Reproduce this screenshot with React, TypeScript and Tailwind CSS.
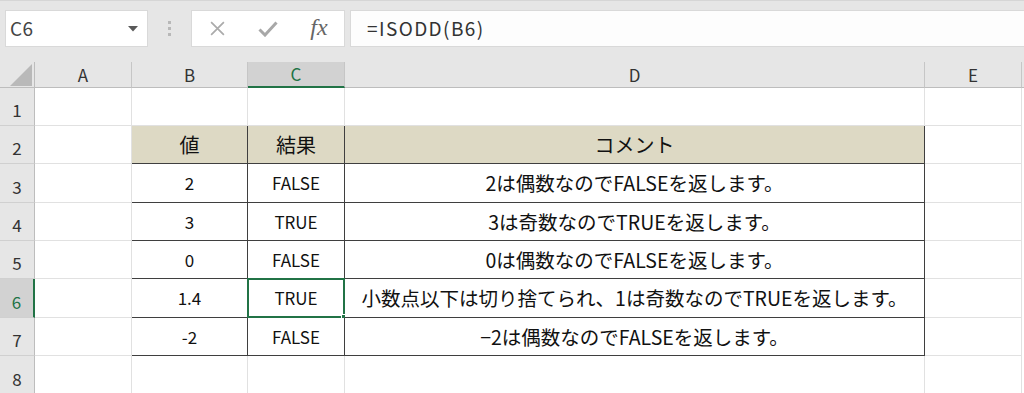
import React from "react";

type Row = { n: number; h: string; cells: [string, string, string] | null; header?: boolean };

const rows: Row[] = [
  { n: 1, h: "h-[38px]", cells: null },
  { n: 2, h: "h-[38px]", cells: ["値", "結果", "コメント"], header: true },
  { n: 3, h: "h-[39px]", cells: ["2", "FALSE", "2は偶数なのでFALSEを返します。"] },
  { n: 4, h: "h-[38px]", cells: ["3", "TRUE", "3は奇数なのでTRUEを返します。"] },
  { n: 5, h: "h-[38px]", cells: ["0", "FALSE", "0は偶数なのでFALSEを返します。"] },
  { n: 6, h: "h-[39px]", cells: ["1.4", "TRUE", "小数点以下は切り捨てられ、1は奇数なのでTRUEを返します。"] },
  { n: 7, h: "h-[38px]", cells: ["-2", "FALSE", "−2は偶数なのでFALSEを返します。"] },
  { n: 8, h: "h-[39px]", cells: null },
];

const cjk = "font-['Noto_Sans_CJK_JP','Noto_Sans',sans-serif]";

function Toolbar() {
  return (
    <div className="h-[62px] bg-[#e6e6e6] border-t border-[#d6d6d6] flex items-start pt-[9px] pl-[5px]">
      <div className="w-[143px] h-[37px] bg-white border border-[#d9d9d9] flex items-center justify-between pl-[4px] pr-[9px]">
        <span className={`text-[19px] text-[#444] tracking-[0.5px] ${cjk}`}>C6</span>
        <svg width="10" height="6" viewBox="0 0 10 6">
          <polygon points="0,0 10,0 5,5.5" fill="#595959" />
        </svg>
      </div>
      <div className="w-[43px] h-[37px] flex flex-col items-center justify-center gap-[3px]">
        <div className="w-[3px] h-[3px] bg-[#b8b8b8]" />
        <div className="w-[3px] h-[3px] bg-[#b8b8b8]" />
        <div className="w-[3px] h-[3px] bg-[#b8b8b8]" />
      </div>
      <div className="w-[154px] h-[37px] bg-white border border-[#d9d9d9] flex items-center">
        <div className="w-[50px] flex justify-center pl-[1px]">
          <svg width="17" height="17" viewBox="0 0 16 16">
            <path d="M2 2 L14 14 M14 2 L2 14" stroke="#ababab" strokeWidth="1.6" />
          </svg>
        </div>
        <div className="w-[52px] flex justify-center">
          <svg width="20" height="16" viewBox="0 0 20 16">
            <path d="M1.5 8.5 L7 14 L18.5 1.5" stroke="#a8a8a8" strokeWidth="3" fill="none" />
          </svg>
        </div>
        <div className="w-[50px] flex justify-center">
          <span className="font-['Liberation_Serif',serif] italic text-[24px] text-[#666] leading-none -mt-[3px]">
            fx
          </span>
        </div>
      </div>
      <div className="flex-1 ml-[5px] h-[37px] bg-[#fdfdfd] border-y border-l border-[#d9d9d9] flex items-center pl-[16px]">
        <span className={`text-[19px] text-[#333] tracking-[1.4px] ${cjk}`}>=ISODD(B6)</span>
      </div>
    </div>
  );
}

function ColHeader() {
  const letters = ["A", "B", "C", "D", "E"];
  return (
    <div className="flex h-[26px]">
      <div className="w-[35px] shrink-0 bg-[#e6e6e6] border-r border-b border-[#bdbdbd] flex items-end justify-end pr-[2px] pb-[1px]">
        <svg width="22" height="22" viewBox="0 0 22 22">
          <polygon points="0,22 22,22 22,0" fill="#b9b9b9" />
        </svg>
      </div>
      {letters.map((l, i) => {
        const w = ["w-[97px]", "w-[116px]", "w-[97px]", "w-[580px]", "w-[97px]"][i];
        const sel = l === "C";
        return (
          <div
            key={l}
            className={`${w} shrink-0 flex items-center justify-center text-[17px] ${cjk} ${
              sel
                ? "bg-[#d2d2d2] text-[#217346] border-b-2 border-b-[#217346] border-r border-r-[#c6c6c6]"
                : "bg-[#e6e6e6] text-[#333] border-r border-b border-r-[#c6c6c6] border-b-[#bdbdbd]"
            }`}
          >
            {l}
          </div>
        );
      })}
      <div className="flex-1 bg-[#e6e6e6] border-b border-[#bdbdbd]" />
    </div>
  );
}

function GridRow({ r }: { r: Row }) {
  const inTable = r.cells !== null;
  const above = r.n === 1;
  const sel6 = r.n === 6;
  const light = "border-[#e1e1e1]";
  const dark = "border-[#3f3f3f]";
  const fill = r.header ? "bg-[#ddd9c4]" : "bg-white";
  return (
    <div className={`flex ${r.h}`}>
      <div
        className={`w-[35px] shrink-0 flex items-end justify-center pb-[3px] text-[17px] ${cjk} ${
          sel6
            ? "bg-[#d2d2d2] text-[#217346] border-r-2 border-r-[#217346] border-b border-b-[#d0d0d0]"
            : "bg-[#e6e6e6] text-[#333] border-r border-r-[#bdbdbd] border-b border-b-[#d0d0d0]"
        }`}
      >
        {r.n}
      </div>
      <div
        className={`w-[97px] shrink-0 bg-white border-b ${light} border-r ${inTable ? dark : light}`}
      />
      {[0, 1, 2].map((i) => {
        const w = ["w-[116px]", "w-[97px]", "w-[580px]"][i];
        const txt = r.cells ? r.cells[i] : "";
        const size = r.header ? "text-[20px]" : i === 2 ? "text-[19.5px]" : "text-[17px]";
        const cls = inTable
          ? `${fill} border-r border-b ${dark}`
          : `bg-white border-r ${light} border-b ${above ? dark : light}`;
        return (
          <div
            key={i}
            className={`${w} shrink-0 relative flex items-center justify-center text-[#111] ${size} ${cjk} ${cls}`}
          >
            <span className="whitespace-nowrap">{txt}</span>
            {sel6 && i === 1 && (
              <div className="absolute -left-[1px] -top-[1px] -right-[1px] -bottom-[1px] border-2 border-[#217346]">
                <div className="absolute -right-[4px] -bottom-[4px] w-[6px] h-[6px] bg-[#217346] border border-white" />
              </div>
            )}
          </div>
        );
      })}
      <div className={`w-[97px] shrink-0 bg-white border-r border-b ${light}`} />
      <div className="flex-1 bg-white" />
    </div>
  );
}

export default function App() {
  return (
    <div className="w-[1024px] h-[393px] overflow-hidden bg-white">
      <Toolbar />
      <ColHeader />
      {rows.map((r) => (
        <GridRow key={r.n} r={r} />
      ))}
    </div>
  );
}
